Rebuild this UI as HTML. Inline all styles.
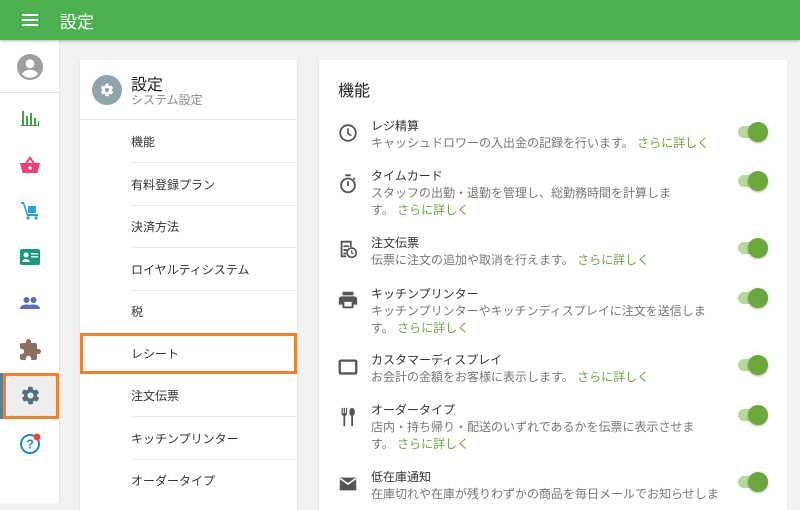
<!DOCTYPE html>
<html><head><meta charset="utf-8"><style>
*{margin:0;padding:0;box-sizing:border-box}
body{width:800px;height:503px;overflow:hidden;background:#f2f2f2;font-family:"Liberation Sans","Noto Sans CJK JP",sans-serif;position:relative;color:#333}
.top{position:absolute;left:0;top:0;width:800px;height:40px;background:#4caf50;box-shadow:0 1px 3px rgba(0,0,0,.3);z-index:5}
.top .t{position:absolute;left:60px;top:8px;color:#fff;font-size:17px}
.side{position:absolute;left:0;top:40px;width:60px;height:463px;background:#fff;border-right:1px solid #e4e4e4}
.ic{position:absolute;left:18px;width:24px;height:24px}
.card{position:absolute;background:#fff;box-shadow:0 1px 2px rgba(0,0,0,.12)}
.item{position:absolute;left:51px;font-size:12px;color:#333}
.div{position:absolute;left:51px;right:0;height:1px;background:#e8e8e8}
.row{position:absolute;left:52px}
.row .h{font-size:12px;color:#333;line-height:17px}
.row .d{font-size:12px;color:#777;line-height:17px}
.g{color:#6ea544}
.tg{position:absolute;left:419px;width:24px;height:12px;border-radius:6px;background:#b5d89b}
.tg:after{content:"";position:absolute;right:-6px;top:-4px;width:20px;height:20px;border-radius:50%;background:#6aa83c;box-shadow:0 1px 2px rgba(0,0,0,.3)}
.ri{position:absolute;left:18px;width:22px;height:22px}
</style></head><body>
<div class="top">
<svg style="position:absolute;left:22px;top:13px" width="16" height="14"><rect y="1" width="16" height="2" fill="#fff"/><rect y="6" width="16" height="2" fill="#fff"/><rect y="11" width="16" height="2" fill="#fff"/></svg>
<div class="t">設定</div></div>
<div class="side">
<svg class="ic" style="top:14px;left:17px;width:26px;height:26px" viewBox="0 0 24 24"><circle cx="12" cy="12" r="12" fill="#9e9e9e"/><circle cx="12" cy="9" r="4" fill="#fff"/><path d="M4.5 18.5c2-3 4.5-4 7.5-4s5.5 1 7.5 4c-2 2.2-4.6 3.5-7.5 3.5s-5.5-1.3-7.5-3.5z" fill="#fff"/></svg>
<div style="position:absolute;left:0;top:52px;width:60px;height:1px;background:#e4e4e4"></div>
<svg class="ic" style="top:66px" viewBox="0 0 24 24"><path d="M4 5h2v14H4zM8 10h2v9H8zM12 7h2v12h-2zM16 12h2v7h-2zM20 15h1v4h-1zM3 19h18v1H3z" fill="#43a047"/></svg>
<svg class="ic" style="top:113px" viewBox="0 0 24 24"><path d="M12 3l-5 7H2l2.5 10h15L22 10h-5z" fill="#ec407a"/><path d="M9.5 10L12 6.5 14.5 10z" fill="#fff"/><circle cx="12" cy="15" r="1.6" fill="#fff"/></svg>
<svg class="ic" style="top:158px" viewBox="0 0 24 24"><path d="M3 4h3l4 12h10v2H9L5 6H3z" fill="#29a0e0"/><rect x="10" y="8" width="8" height="7" fill="#29a0e0"/><circle cx="10" cy="20" r="1.6" fill="#29a0e0"/><circle cx="18" cy="20" r="1.6" fill="#29a0e0"/></svg>
<svg class="ic" style="top:205px" viewBox="0 0 24 24"><rect x="2" y="4" width="20" height="16" rx="2" fill="#179a7e"/><circle cx="8" cy="10" r="2.5" fill="#fff"/><path d="M4 17c1-2.5 2.5-3 4-3s3 .5 4 3z" fill="#fff"/><rect x="13" y="8" width="7" height="1.5" fill="#fff"/><rect x="13" y="11" width="7" height="1.5" fill="#fff"/></svg>
<svg class="ic" style="top:251px" viewBox="0 0 24 24"><circle cx="8.5" cy="9" r="3" fill="#5c6bc0"/><circle cx="15.5" cy="9" r="3" fill="#5c6bc0"/><path d="M2 18c0-3 3-4.5 6.5-4.5S15 15 15 18zM13 18c0-2-.5-3-1.5-4 1-.4 2.5-.5 4-.5 3.5 0 6.5 1.5 6.5 4.5z" fill="#5c6bc0"/></svg>
<svg class="ic" style="top:298px" viewBox="0 0 24 24"><path d="M20.5 11H19V7a2 2 0 0 0-2-2h-4V3.5a2.5 2.5 0 0 0-5 0V5H4a2 2 0 0 0-2 2v3.8h1.5a2.7 2.7 0 0 1 0 5.4H2V20a2 2 0 0 0 2 2h3.8v-1.5a2.7 2.7 0 0 1 5.4 0V22H17a2 2 0 0 0 2-2v-4h1.5a2.5 2.5 0 0 0 0-5z" fill="#8d6e63"/></svg>
<div style="position:absolute;left:3px;top:333px;width:56px;height:46px;background:#eee;border:3px solid #f0822f"></div>
<div style="position:absolute;left:0;top:333px;width:3px;height:46px;background:#607d8b"></div>
<svg class="ic" style="top:345px;left:20px;width:21px;height:21px" viewBox="0 0 24 24"><path d="M19.4 13c.04-.3.1-.7.1-1s0-.7-.1-1l2.1-1.6c.2-.2.2-.4.1-.6l-2-3.5c-.1-.2-.4-.3-.6-.2l-2.5 1a7 7 0 0 0-1.7-1L14.4 2.4c0-.2-.2-.4-.5-.4h-4c-.2 0-.4.2-.5.4L9 5.1c-.6.3-1.2.6-1.700 1l-2.5-1c-.2-.1-.5 0-.6.2l-2 3.5c-.1.2 0 .5.1.6L4.6 11c0 .3-.1.7-.1 1s0 .7.1 1l-2.1 1.6c-.2.2-.2.4-.1.6l2 3.5c.1.2.4.3.6.2l2.5-1c.5.4 1.1.7 1.7 1l.4 2.7c0 .2.2.4.5.4h4c.2 0 .4-.2.5-.4l.4-2.7c.6-.3 1.2-.6 1.7-1l2.5 1c.2.1.5 0 .6-.2l2-3.5c.1-.2 0-.5-.1-.6zM12 15.5a3.5 3.5 0 1 1 0-7 3.5 3.5 0 0 1 0 7z" fill="#546e7a"/></svg>
<svg class="ic" style="top:392px" viewBox="0 0 24 24"><circle cx="12" cy="12" r="9" fill="none" stroke="#1e88e5" stroke-width="2"/><text x="12" y="16.5" font-size="13" font-weight="bold" text-anchor="middle" fill="#1e88e5" font-family="Liberation Sans">?</text><circle cx="19" cy="5" r="3.5" fill="#f44336"/></svg>
</div>
<div class="card" style="left:80px;top:60px;width:217px;height:450px">
<svg style="position:absolute;left:12px;top:15px" width="30" height="30" viewBox="0 0 30 30"><circle cx="15" cy="15" r="15" fill="#90a4ae"/><g transform="translate(7.5 7.5) scale(.625)"><path d="M19.4 13c.04-.3.1-.7.1-1s0-.7-.1-1l2.1-1.6c.2-.2.2-.4.1-.6l-2-3.5c-.1-.2-.4-.3-.6-.2l-2.5 1a7 7 0 0 0-1.7-1L14.4 2.4c0-.2-.2-.4-.5-.4h-4c-.2 0-.4.2-.5.4L9 5.1c-.6.3-1.2.6-1.7 1l-2.5-1c-.2-.1-.5 0-.6.2l-2 3.5c-.1.2 0 .5.1.6L4.6 11c0 .3-.1.7-.1 1s0 .7.1 1l-2.1 1.6c-.2.2-.2.4-.1.6l2 3.5c.1.2.4.3.6.2l2.5-1c.5.4 1.1.7 1.7 1l.4 2.7c0 .2.2.4.5.4h4c.2 0 .4-.2.5-.4l.4-2.7c.6-.3 1.2-.6 1.7-1l2.5 1c.2.1.5 0 .6-.2l2-3.5c.1-.2 0-.5-.1-.6zM12 15.5a3.5 3.5 0 1 1 0-7 3.5 3.5 0 0 1 0 7z" fill="#fff"/></g></svg>
<div style="position:absolute;left:51px;top:11px;font-size:16px;color:#222">設定</div>
<div style="position:absolute;left:51px;top:31px;font-size:12px;color:#888">システム設定</div>
<div style="position:absolute;left:0;right:0;top:59px;height:1px;background:#e8e8e8"></div>
<div class="item" style="top:73px">機能</div><div class="div" style="top:102px"></div>
<div class="item" style="top:116px">有料登録プラン</div><div class="div" style="top:145px"></div>
<div class="item" style="top:158px">決済方法</div><div class="div" style="top:187px"></div>
<div class="item" style="top:201px">ロイヤルティシステム</div><div class="div" style="top:230px"></div>
<div class="item" style="top:243px">税</div>
<div style="position:absolute;left:0;top:273px;width:217px;height:41px;border:3px solid #f0822f"></div>
<div class="item" style="top:285px">レシート</div>
<div class="item" style="top:327px">注文伝票</div><div class="div" style="top:356px"></div>
<div class="item" style="top:370px">キッチンプリンター</div><div class="div" style="top:399px"></div>
<div class="item" style="top:412px">オーダータイプ</div>
</div>
<div class="card" style="left:319px;top:60px;width:468px;height:450px">
<div style="position:absolute;left:19px;top:17px;font-size:16px;color:#222">機能</div>
<svg class="ri" style="top:62px" viewBox="0 0 24 24"><circle cx="12" cy="12" r="8.5" fill="none" stroke="#555" stroke-width="2"/><path d="M12 7v5.5l3.5 2.5" fill="none" stroke="#555" stroke-width="1.8"/></svg>
<div class="row" style="top:58px"><div class="h">レジ精算</div><div class="d">キャッシュドロワーの入出金の記録を行います。 <span class="g">さらに詳しく</span></div></div>
<div class="tg" style="top:66px"></div>
<svg class="ri" style="top:113px" viewBox="0 0 24 24"><circle cx="12" cy="13.5" r="7.5" fill="none" stroke="#555" stroke-width="2"/><path d="M9 2.5h6M12 9v5" stroke="#555" stroke-width="2"/><path d="M18 5.5l1.5 1.5" stroke="#555" stroke-width="2"/></svg>
<div class="row" style="top:108px"><div class="h">タイムカード</div><div class="d">スタッフの出勤・退勤を管理し、総勤務時間を計算しま<br>す。 <span class="g">さらに詳しく</span></div></div>
<div class="tg" style="top:115px"></div>
<svg class="ri" style="top:178px" viewBox="0 0 24 24"><path d="M4 3h12v7h-2V5H6v14h4v2H4z" fill="#555"/><path d="M7 8h6v2H7zM7 12h4v2H7zM7 16h3v2H7z" fill="#555"/><circle cx="16" cy="16" r="5" fill="none" stroke="#555" stroke-width="1.8"/><path d="M16 13.5V16l1.8 1.2" fill="none" stroke="#555" stroke-width="1.5"/></svg>
<div class="row" style="top:175px"><div class="h">注文伝票</div><div class="d">伝票に注文の追加や取消を行えます。 <span class="g">さらに詳しく</span></div></div>
<div class="tg" style="top:182px"></div>
<svg class="ri" style="top:229px" viewBox="0 0 24 24"><path d="M19 8H5a3 3 0 0 0-3 3v6h4v4h12v-4h4v-6a3 3 0 0 0-3-3zm-3 11H8v-5h8zM18 3H6v4h12z" fill="#555"/></svg>
<div class="row" style="top:226px"><div class="h">キッチンプリンター</div><div class="d">キッチンプリンターやキッチンディスプレイに注文を送信しま<br>す。 <span class="g">さらに詳しく</span></div></div>
<div class="tg" style="top:232px"></div>
<svg class="ri" style="top:296px" viewBox="0 0 24 24"><rect x="3" y="5" width="18" height="14" rx="1" fill="none" stroke="#555" stroke-width="2.5"/></svg>
<div class="row" style="top:292px"><div class="h">カスタマーディスプレイ</div><div class="d">お会計の金額をお客様に表示します。 <span class="g">さらに詳しく</span></div></div>
<div class="tg" style="top:299px"></div>
<svg class="ri" style="top:346px" viewBox="0 0 24 24"><path d="M5 2v6c0 1.5 1 2.5 2 2.8V22h2V10.8c1-.3 2-1.3 2-2.8V2H9.7v6H8.7V2H7.3v6H6.3V2z" fill="#555"/><path d="M16.5 2c-2 0-3 2.5-3 5 0 2 1 3.3 2 3.7V22h2V10.7c1-.4 2-1.700 2-3.700 0-2.5-1-5-3-5z" fill="#555"/></svg>
<div class="row" style="top:342px"><div class="h">オーダータイプ</div><div class="d">店内・持ち帰り・配送のいずれであるかを伝票に表示させま<br>す。 <span class="g">さらに詳しく</span></div></div>
<div class="tg" style="top:349px"></div>
<svg class="ri" style="top:413px" viewBox="0 0 24 24"><path d="M3 5h18v14H3z" fill="#555"/><path d="M3.5 6l8.5 6 8.5-6" fill="none" stroke="#fff" stroke-width="1.8"/></svg>
<div class="row" style="top:409px"><div class="h">低在庫通知</div><div class="d">在庫切れや在庫が残りわずかの商品を毎日メールでお知らせしま</div></div>
<div class="tg" style="top:416px"></div>
</div>
</body></html>
